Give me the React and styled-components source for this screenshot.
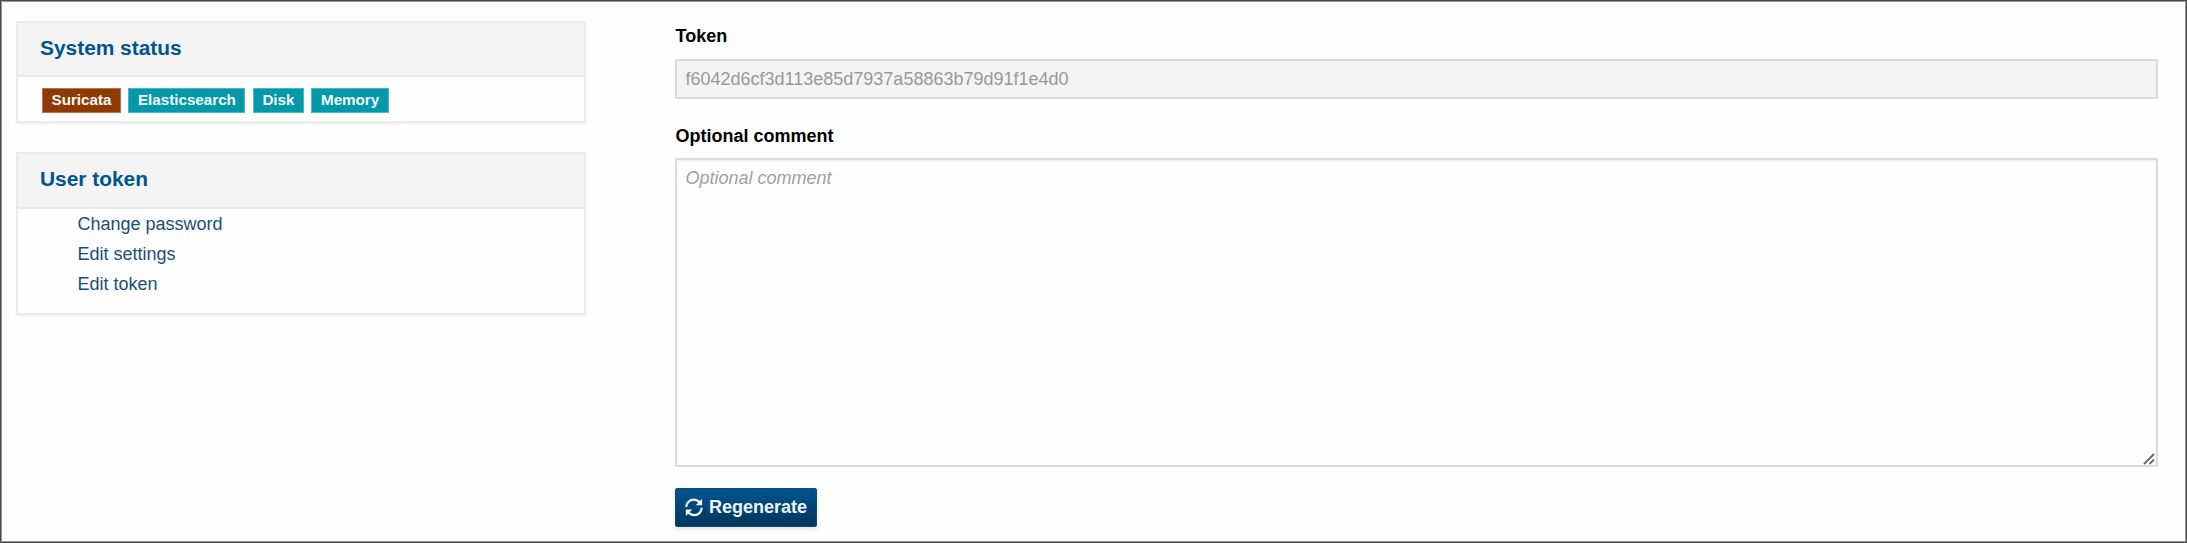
import React from "react";
import styled, { createGlobalStyle } from "styled-components";

const GlobalStyle = createGlobalStyle`
  *, *::before, *::after { box-sizing: border-box; }
  body {
    margin: 0;
    background: #fefefe;
    font-family: "Liberation Sans", Arial, sans-serif;
    font-size: 18px;
    color: #000;
    overflow: hidden;
  }
`;

const Page = styled.div`
  display: flex;
  align-items: flex-start;
  width: 2187px;
  height: 543px;
  border: 1px solid #4b494c;
  box-shadow: inset 0 0 0 1px #98969a;
  padding: 20px 28px 0 15px;
`;

const Sidebar = styled.aside`
  display: flex;
  flex-direction: column;
  gap: 29px;
  width: 570px;
  margin-right: 89px;
`;

const Card = styled.section`
  height: ${(p) => p.$height}px;
  border: 2px solid #ebebeb;
  border-radius: 1px;
  box-shadow: 0 1px 2px rgba(0, 0, 0, 0.07);
`;

const CardTitle = styled.h2`
  margin: 0;
  height: ${(p) => p.$height}px;
  padding-left: 22px;
  border-bottom: 2px solid #e9e9e9;
  background: #f4f4f4;
  color: #00558f;
  font-size: 20.9px;
  line-height: 50px;
`;

const Tags = styled.div`
  display: flex;
  gap: 7.5px;
  padding: 11px 23px 0 24px;
`;

const Tag = styled.span`
  height: 25px;
  padding: 0 9.5px;
  background: ${(p) => (p.$alert ? "#8f3a00" : "#0399aa")};
  box-shadow: inset 0 0 0 1px rgba(255, 255, 255, 0.3);
  color: #f2fafa;
  font-size: 15.2px;
  font-weight: bold;
  line-height: 24px;
`;

const Links = styled.ul`
  list-style: none;
  margin: 0;
  padding: 0 0 0 59.5px;
`;

const LinkItem = styled.li`
  height: 30px;
  line-height: 30px;
`;

const Link = styled.a`
  color: #194f77;
  text-decoration: none;
`;

const Form = styled.form`
  display: flex;
  flex-direction: column;
  flex: 1;
`;

const Label = styled.label`
  margin-top: ${(p) => p.$top}px;
  padding-left: 0.5px;
  height: 30px;
  line-height: 30px;
  font-weight: bold;
`;

const fieldText = `
  width: 100%;
  border: 2px solid #dadada;
  border-radius: 2px;
  font-family: inherit;
  font-size: 18px;
  outline: none;
`;

const TokenInput = styled.input`
  ${fieldText}
  height: 40px;
  margin-top: 8px;
  padding: 0 8.5px;
  background: #f4f4f4;
  color: #999;
`;

const CommentField = styled.div`
  position: relative;
  height: 309px;
  margin-top: 7px;
`;

const CommentInput = styled.textarea`
  ${fieldText}
  display: block;
  height: 100%;
  padding: 7px 8.5px;
  line-height: 22px;
  resize: none;
  background: #fefefe;
  box-shadow: inset 0 1px 2px rgba(0, 0, 0, 0.06);
  &::placeholder { color: #a0a0a0; font-style: italic; opacity: 1; }
`;

const ResizeGrip = styled.svg`
  position: absolute;
  right: 2px;
  bottom: 1px;
`;

const Button = styled.button`
  display: flex;
  align-items: center;
  align-self: flex-start;
  gap: 6px;
  width: 142px;
  height: 39px;
  margin-top: 21px;
  padding: 0 9px;
  border: 1px solid #1c4664;
  border-radius: 2px;
  background: linear-gradient(#005591, #00365d);
  box-shadow: 0 3px 4px rgba(0, 0, 0, 0.1);
  color: #f0f4f7;
  font: bold 18px "Liberation Sans", Arial, sans-serif;
`;

const statuses = [
  { name: "Suricata", alert: true },
  { name: "Elasticsearch" },
  { name: "Disk" },
  { name: "Memory" },
];

const links = ["Change password", "Edit settings", "Edit token"];

function RefreshIcon() {
  return (
    <svg width="18" height="19" viewBox="0 0 18 19" fill="none" stroke="currentColor" strokeWidth="2.2">
      <path d="M1.300 9C1.300 4.600 4.800 1.700 8.700 1.700c2.700 0 4.800 1.100 6.400 3.200" />
      <path d="M16.700 9.800c0 4.400-3.500 7.300-7.400 7.300-2.700 0-4.800-1.100-6.400-3.200" />
      <path d="M17.200 .7v6.500h-6.500z" fill="currentColor" stroke="none" />
      <path d="M.8 18.100v-6.500h6.500z" fill="currentColor" stroke="none" />
    </svg>
  );
}

export default function App() {
  return (
    <>
      <GlobalStyle />
      <Page>
        <Sidebar>
          <Card $height={102}>
            <CardTitle $height={54}>System status</CardTitle>
            <Tags>
              {statuses.map((s) => (
                <Tag key={s.name} $alert={s.alert}>{s.name}</Tag>
              ))}
            </Tags>
          </Card>
          <Card $height={163}>
            <CardTitle $height={55}>User token</CardTitle>
            <Links>
              {links.map((l) => (
                <LinkItem key={l}><Link>{l}</Link></LinkItem>
              ))}
            </Links>
          </Card>
        </Sidebar>
        <Form>
          <Label $top={0} htmlFor="token">Token</Label>
          <TokenInput id="token" readOnly value="f6042d6cf3d113e85d7937a58863b79d91f1e4d0" />
          <Label $top={22} htmlFor="comment">Optional comment</Label>
          <CommentField>
            <CommentInput id="comment" placeholder="Optional comment" />
            <ResizeGrip width="13" height="13" viewBox="0 0 13 13" stroke="#666" strokeWidth="1.8">
              <path d="M1 11 11 1M6.500 11 11 6.500" />
            </ResizeGrip>
          </CommentField>
          <Button type="button"><RefreshIcon />Regenerate</Button>
        </Form>
      </Page>
    </>
  );
}
